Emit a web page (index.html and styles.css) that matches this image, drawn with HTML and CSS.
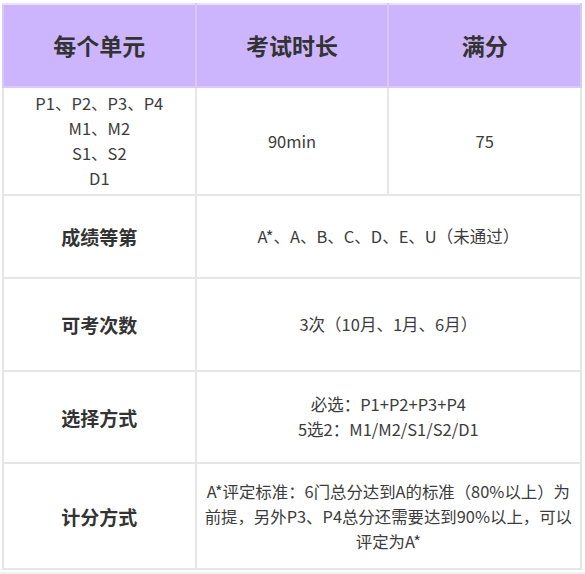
FILE: index.html
```html
<!DOCTYPE html>
<html lang="zh">
<head>
<meta charset="utf-8">
<link rel="stylesheet" href="styles.css">
</head>
<body>
<div class="page">
  <table class="exam">
    <colgroup><col class="c"><col class="c"><col class="c"></colgroup>
    <thead>
      <tr class="r-head">
        <th>每个单元</th>
        <th>考试时长</th>
        <th>满分</th>
      </tr>
    </thead>
    <tbody>
      <tr class="r1">
        <td>P1、P2、P3、P4<br>M1、M2<br>S1、S2<br>D1</td>
        <td>90min</td>
        <td>75</td>
      </tr>
      <tr class="r2">
        <td class="label">成绩等第</td>
        <td colspan="2">A*、A、B、C、D、E、U（未通过）</td>
      </tr>
      <tr class="r3">
        <td class="label">可考次数</td>
        <td colspan="2">3次（10月、1月、6月）</td>
      </tr>
      <tr class="r4">
        <td class="label">选择方式</td>
        <td colspan="2">必选：P1+P2+P3+P4<br>5选2：M1/M2/S1/S2/D1</td>
      </tr>
      <tr class="r5">
        <td class="label">计分方式</td>
        <td colspan="2" class="long">A*评定标准：6门总分达到A的标准（80%以上）为<br>前提，另外P3、P4总分还需要达到90%以上，可以<br>评定为A*</td>
      </tr>
    </tbody>
  </table>
  <div class="foot"></div>
</div>
</body>
</html>
```
FILE: styles.css
```css
html, body {
  margin: 0;
  padding: 0;
  background: #ffffff;
}
.page {
  width: 585px;
  height: 574px;
  display: flex;
  flex-direction: column;
  padding-top: 3px;
  box-sizing: border-box;
  overflow: hidden;
  font-family: "Noto Sans CJK SC", "Noto Sans", sans-serif;
}
.exam {
  margin-left: 2px;
  width: 580px;
  border-collapse: collapse;
  table-layout: fixed;
}
.exam .c {
  width: 33.333%;
}
.exam th,
.exam td {
  border: 2px solid #e6e6e6;
  text-align: center;
  vertical-align: middle;
  padding: 0 4px;
  color: #3c3c3c;
  font-size: 16.5px;
  line-height: 25px;
}
.exam th {
  background: #cdb5fd;
  border-color: #d9c9fb;
  border-top-color: #e9e1fb;
  color: #333333;
  font-size: 23px;
  font-weight: 700;
}
.exam .label {
  font-size: 19px;
  font-weight: 700;
  color: #333333;
}
.exam .long {
  white-space: nowrap;
  font-size: 16.4px;
}
.r-head { height: 83px; }
.r1 { height: 108px; }
.r2 { height: 83px; }
.r3 { height: 93px; }
.r4 { height: 92px; }
.r5 { height: 106px; }
.foot {
  flex: 1;
  margin-top: 2px;
  background: #f2f2f2;
}
```
